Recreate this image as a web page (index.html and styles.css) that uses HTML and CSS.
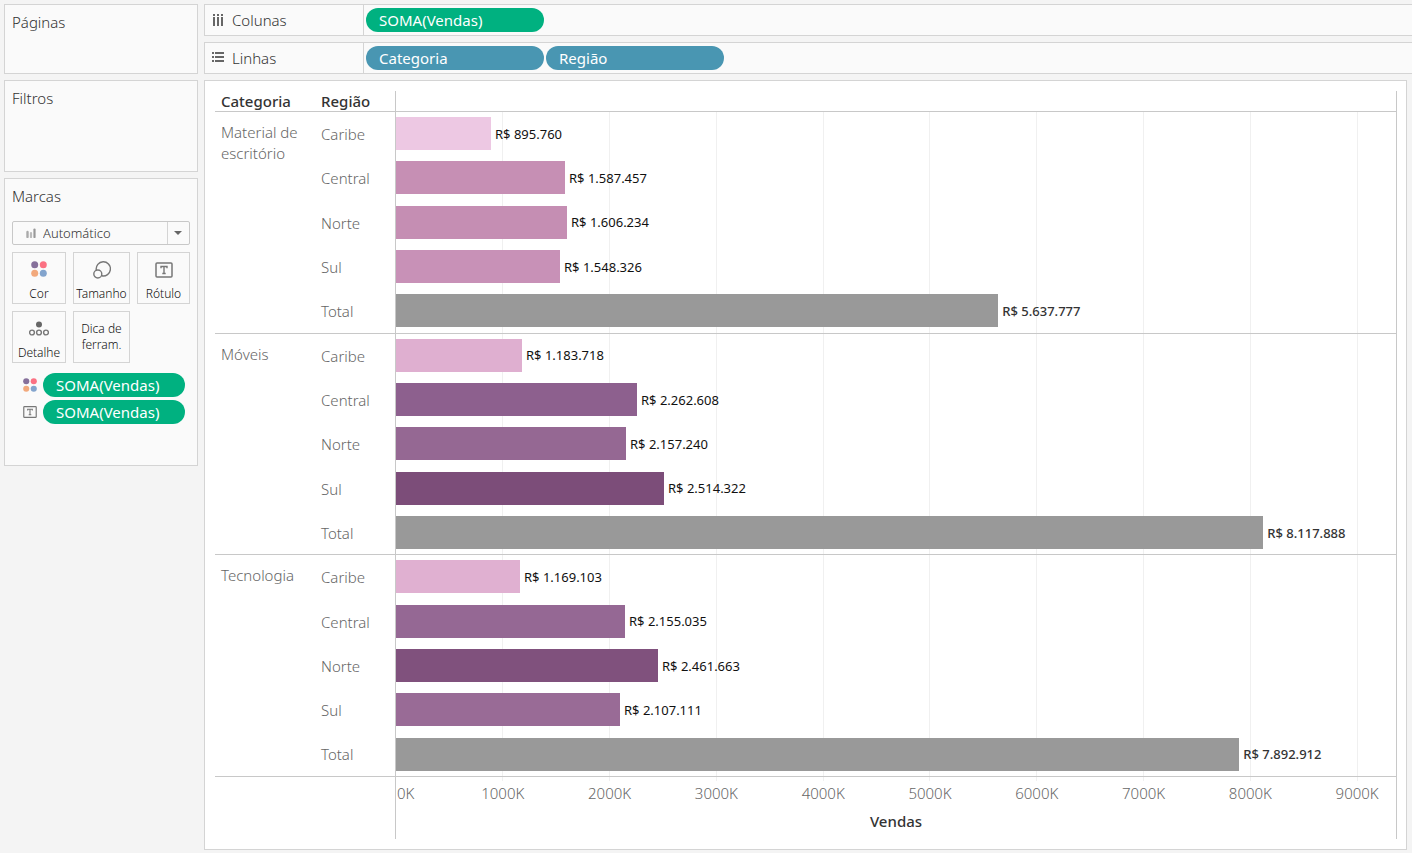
FILE: index.html
```
<!DOCTYPE html>
<html lang="pt-BR">
<head>
<meta charset="utf-8">
<meta name="viewport" content="width=device-width, initial-scale=1">
<title>Vendas por categoria e região</title>
<link rel="stylesheet" href="styles.css">
</head>
<body>
<svg class="sprite" aria-hidden="true">
  <symbol id="icon-color" viewBox="0 0 16 16">
    <circle cx="3.7" cy="3.7" r="3.5" fill="#86709b"/><circle cx="12.3" cy="3.7" r="3.5" fill="#fb7183"/>
    <circle cx="3.7" cy="12.3" r="3.5" fill="#f2a97c"/><circle cx="12.3" cy="12.3" r="3.5" fill="#83a4cd"/>
  </symbol>
  <symbol id="icon-label" viewBox="0 0 18 16">
    <rect x="1" y="1" width="16" height="14" rx="1" fill="none" stroke="#777" stroke-width="1.5"/>
    <path d="M6 6.2V4.5h6v1.7M9 4.5v7M7.3 11.5h3.4" fill="none" stroke="#777" stroke-width="1.4"/>
  </symbol>
</svg>
<div class="workspace">
  <aside class="sidebar">
    <section class="card card-pages"><h2 class="card-title">Páginas</h2></section>
    <section class="card card-filters"><h2 class="card-title">Filtros</h2></section>
    <section class="card card-marks">
      <h2 class="card-title" id="marks-title">Marcas</h2>
      <div class="mark-type">
        <select class="mark-select" aria-labelledby="marks-title"><option>Automático</option></select>
        <svg class="mark-bars" viewBox="0 0 10 10" aria-hidden="true">
          <path d="M1.5 4v5" stroke="#aaa" stroke-width="2.4" stroke-linecap="round"/>
          <path d="M5 5v4" stroke="#bbb" stroke-width="2.2" stroke-linecap="round"/>
          <path d="M8.5 1.5v7.5" fill="none" stroke="#999" stroke-width="2.2" stroke-linecap="round"/>
        </svg>
        <svg class="mark-arrow" viewBox="0 0 22 22" aria-hidden="true">
          <path d="M.5 0v22" stroke="#d4d4d4"/><path d="M7 9h8l-4 4z" fill="#666"/>
        </svg>
      </div>
      <div class="mark-grid">
        <button class="mark-button" type="button"><svg class="icon-16" aria-hidden="true"><use href="#icon-color"/></svg><span>Cor</span></button>
        <button class="mark-button" type="button">
          <svg class="icon-18" viewBox="0 0 18 18" fill="none" stroke="#777" stroke-width="1.4" aria-hidden="true">
            <path d="M3.3 9A7.1 7.1 0 1 1 8.8 14.8"/><circle cx="4.8" cy="13" r="4"/>
          </svg><span>Tamanho</span></button>
        <button class="mark-button" type="button"><svg class="icon-18" aria-hidden="true"><use href="#icon-label"/></svg><span>Rótulo</span></button>
        <button class="mark-button" type="button">
          <svg class="icon-20" viewBox="0 0 20 16" aria-hidden="true">
            <circle cx="10" cy="4.5" r="3" fill="#666"/>
            <g fill="none" stroke="#777" stroke-width="1.4"><circle cx="3" cy="12.5" r="2.4"/><circle cx="10" cy="12.5" r="2.4"/><circle cx="17" cy="12.5" r="2.4"/></g>
          </svg><span>Detalhe</span></button>
        <button class="mark-button mark-button-text" type="button"><span>Dica de ferram.</span></button>
      </div>
      <ul class="encodings">
        <li class="encoding"><svg class="icon-14" aria-hidden="true"><use href="#icon-color"/></svg><button class="pill pill-measure" type="button">SOMA(Vendas)</button></li>
        <li class="encoding"><svg class="icon-14" aria-hidden="true"><use href="#icon-label"/></svg><button class="pill pill-measure" type="button">SOMA(Vendas)</button></li>
      </ul>
    </section>
  </aside>
  <main class="content">
    <section class="shelf">
      <h2 class="shelf-label">
        <svg class="icon-12" viewBox="0 0 12 12" fill="#666" aria-hidden="true"><path d="M1 0h2v2H1zM5 0h2v2H5zM9 0h2v2H9zM1 3h2v9H1zM5 3h2v9H5zM9 3h2v9H9z"/></svg>Colunas
      </h2>
      <div class="shelf-fields"><button class="pill pill-measure" type="button">SOMA(Vendas)</button></div>
    </section>
    <section class="shelf">
      <h2 class="shelf-label">
        <svg class="icon-12" viewBox="0 0 12 12" fill="#666" aria-hidden="true"><path d="M0 0h2v2H0zM3 0h9v2H3zM0 4h2v2H0zM3 4h9v2H3zM0 8h2v2H0zM3 8h9v2H3z"/></svg>Linhas
      </h2>
      <div class="shelf-fields"><button class="pill pill-dimension" type="button">Categoria</button><button class="pill pill-dimension" type="button">Região</button></div>
    </section>
    <section class="view">
      <table class="chart">
        <colgroup><col class="col-category"><col class="col-region"><col></colgroup>
        <thead>
          <tr><th scope="col">Categoria</th><th scope="col">Região</th><td class="pane"></td></tr>
        </thead>
        <tbody>
          <tr><th class="category" rowspan="5" scope="rowgroup">Material de escritório</th><th scope="row">Caribe</th><td class="pane"><div class="mark"><span class="bar" style="width:9.5%;background:#edc8e3"></span><span>R$ 895.760</span></div></td></tr>
          <tr><th scope="row">Central</th><td class="pane"><div class="mark"><span class="bar" style="width:16.9%;background:#c68fb4"></span><span>R$ 1.587.457</span></div></td></tr>
          <tr><th scope="row">Norte</th><td class="pane"><div class="mark"><span class="bar" style="width:17.1%;background:#c58eb3"></span><span>R$ 1.606.234</span></div></td></tr>
          <tr><th scope="row">Sul</th><td class="pane"><div class="mark"><span class="bar" style="width:16.4%;background:#c891b7"></span><span>R$ 1.548.326</span></div></td></tr>
          <tr><th scope="row">Total</th><td class="pane"><div class="mark mark-total"><span class="bar" style="width:60.23%"></span><span>R$ 5.637.777</span></div></td></tr>
        </tbody>
        <tbody>
          <tr><th class="category" rowspan="5" scope="rowgroup">Móveis</th><th scope="row">Caribe</th><td class="pane"><div class="mark"><span class="bar" style="width:12.6%;background:#dfafd0"></span><span>R$ 1.183.718</span></div></td></tr>
          <tr><th scope="row">Central</th><td class="pane"><div class="mark"><span class="bar" style="width:24.1%;background:#8d608e"></span><span>R$ 2.262.608</span></div></td></tr>
          <tr><th scope="row">Norte</th><td class="pane"><div class="mark"><span class="bar" style="width:23.0%;background:#956893"></span><span>R$ 2.157.240</span></div></td></tr>
          <tr><th scope="row">Sul</th><td class="pane"><div class="mark"><span class="bar" style="width:26.8%;background:#7c4d79"></span><span>R$ 2.514.322</span></div></td></tr>
          <tr><th scope="row">Total</th><td class="pane"><div class="mark mark-total"><span class="bar" style="width:86.73%"></span><span>R$ 8.117.888</span></div></td></tr>
        </tbody>
        <tbody>
          <tr><th class="category" rowspan="5" scope="rowgroup">Tecnologia</th><th scope="row">Caribe</th><td class="pane"><div class="mark"><span class="bar" style="width:12.4%;background:#e0b0d1"></span><span>R$ 1.169.103</span></div></td></tr>
          <tr><th scope="row">Central</th><td class="pane"><div class="mark"><span class="bar" style="width:22.9%;background:#956894"></span><span>R$ 2.155.035</span></div></td></tr>
          <tr><th scope="row">Norte</th><td class="pane"><div class="mark"><span class="bar" style="width:26.2%;background:#80517d"></span><span>R$ 2.461.663</span></div></td></tr>
          <tr><th scope="row">Sul</th><td class="pane"><div class="mark"><span class="bar" style="width:22.4%;background:#996b96"></span><span>R$ 2.107.111</span></div></td></tr>
          <tr><th scope="row">Total</th><td class="pane"><div class="mark mark-total"><span class="bar" style="width:84.33%"></span><span>R$ 7.892.912</span></div></td></tr>
        </tbody>
        <tfoot>
          <tr><td colspan="2"></td><td class="pane">
            <div class="ticks"><span>0K</span><span>1000K</span><span>2000K</span><span>3000K</span><span>4000K</span><span>5000K</span><span>6000K</span><span>7000K</span><span>8000K</span><span>9000K</span></div>
            <div class="axis-title">Vendas</div>
          </td></tr>
        </tfoot>
      </table>
    </section>
  </main>
</div>
</body>
</html>
```
FILE: styles.css
```
* { box-sizing: border-box; }
body {
  margin: 0;
  background: #f4f4f4;
  color: #333;
  font: 300 15px/20px "Noto Sans", "Open Sans", sans-serif;
}
h2, ul { margin: 0; padding: 0; font: inherit; list-style: none; }
button, select { font: inherit; color: inherit; }
.sprite { position: absolute; width: 0; height: 0; }
svg { display: block; flex: none; }
.icon-12 { width: 12px; height: 12px; }
.icon-14 { width: 14px; height: 14px; }
.icon-16 { width: 16px; height: 16px; }
.icon-18 { width: 18px; height: 18px; }
.icon-20 { width: 20px; height: 16px; }

.workspace {
  display: flex;
  gap: 6px;
  min-height: 100vh;
  padding: 4px 0 3px 4px;
}

/* Sidebar cards */
.sidebar { display: flex; flex: none; flex-direction: column; gap: 6px; width: 194px; }
.card { padding: 7px; border: 1px solid #d4d4d4; background: #fafafa; }
.card-pages { min-height: 70px; }
.card-filters { min-height: 92px; }
.card-marks { min-height: 288px; }

.mark-type { position: relative; margin-top: 15px; }
.mark-select {
  display: block;
  width: 100%;
  height: 24px;
  padding: 0 24px 0 30px;
  appearance: none;
  border: 1px solid #c8c8c8;
  border-radius: 2px;
  background: #fafafa;
  font-size: 13px;
}
.mark-bars { position: absolute; left: 14px; top: 7px; width: 10px; height: 10px; }
.mark-arrow { position: absolute; right: 1px; top: 1px; width: 22px; height: 22px; }

.mark-grid { display: grid; grid-template-columns: 54fr 57fr 53fr; gap: 7px; margin-top: 7px; }
.mark-button {
  display: flex;
  flex-direction: column;
  align-items: center;
  justify-content: space-between;
  min-width: 0;
  height: 52px;
  padding: 8px 0 1px;
  border: 1px solid #d4d4d4;
  background: #fafafa;
  color: #111;
  font-size: 12px;
  line-height: 16px;
}
.mark-button-text { justify-content: center; padding: 0 6px; }

.encodings { display: grid; gap: 3px; margin-top: 10px; }
.encoding { display: flex; align-items: center; gap: 6px; padding: 0 5px 0 11px; }
.encoding .pill { flex: 1; }

.pill {
  height: 24px;
  padding: 0 13px;
  border: 0;
  border-radius: 12px;
  color: #fff;
  font-weight: 400;
  line-height: 24px;
  text-align: left;
}
.pill-measure { background: #00b180; }
.pill-dimension { background: #4996b2; }

/* Shelves */
.content { display: flex; flex: 1; flex-direction: column; gap: 6px; min-width: 0; }
.shelf { display: flex; height: 32px; border: 1px solid #d4d4d4; border-right: 0; background: #fafafa; }
.shelf-label {
  display: flex;
  flex: none;
  align-items: center;
  gap: 8px;
  width: 159px;
  padding-left: 7px;
  border-right: 1px solid #d4d4d4;
}
.shelf-fields { display: flex; align-items: center; gap: 2px; padding-left: 2px; }
.shelf-fields .pill { width: 178px; }

/* Bar chart */
.view {
  display: flex;
  flex: 1;
  margin-right: 5px;
  padding: 10px 9px 10px 10px;
  border: 1px solid #d4d4d4;
  background: #fff;
}
.chart { flex: 1; width: 100%; table-layout: fixed; border-spacing: 0; }
.col-category { width: 100px; }
.col-region { width: 80px; }
.chart th { padding: 0 6px; color: #666; font-weight: 300; text-align: left; }
.chart td { padding: 0; }
.chart .pane { border-left: 1px solid #c8c8c8; border-right: 1px solid #c8c8c8; }
.chart thead tr { height: 21px; }
.chart thead th, .chart thead td { border-bottom: 1px solid #c8c8c8; }
.chart thead th { color: #333; font-weight: 500; }
.chart tbody tr:last-child > *, .chart .category { border-bottom: 1px solid #c8c8c8; }
.chart .category { padding-top: 10px; line-height: 21px; vertical-align: top; }
.chart tbody .pane, .chart tfoot .pane {
  --line: linear-gradient(#f0f0f0, #f0f0f0);
  background-image: var(--line), var(--line), var(--line), var(--line), var(--line), var(--line), var(--line), var(--line), var(--line);
  background-position: 10.65% 0, 21.34% 0, 32.02% 0, 42.71% 0, 53.4% 0, 64.1% 0, 74.8% 0, 85.5% 0, 96.2% 0;
  background-repeat: no-repeat;
  background-size: 1px 100%;
}
.chart tfoot .pane { height: 62px; background-size: 1px 4px; vertical-align: top; }
.mark {
  display: flex;
  align-items: center;
  gap: 4px;
  padding-bottom: 1px;
  color: #111;
  font-size: 13px;
  font-weight: 400;
  white-space: nowrap;
}
.bar { flex: none; height: 33px; }
.mark-total { padding-bottom: 0; color: #333; font-weight: 500; }
.mark-total .bar { background: #999; }
.ticks { display: flex; padding-top: 6px; overflow: hidden; color: #666; }
.ticks span { flex: 0 0 10.68%; text-align: center; }
.ticks span:first-child { flex-basis: 5.34%; padding-left: 1px; text-align: left; }
.axis-title { margin-top: 8px; font-weight: 500; text-align: center; }
```
